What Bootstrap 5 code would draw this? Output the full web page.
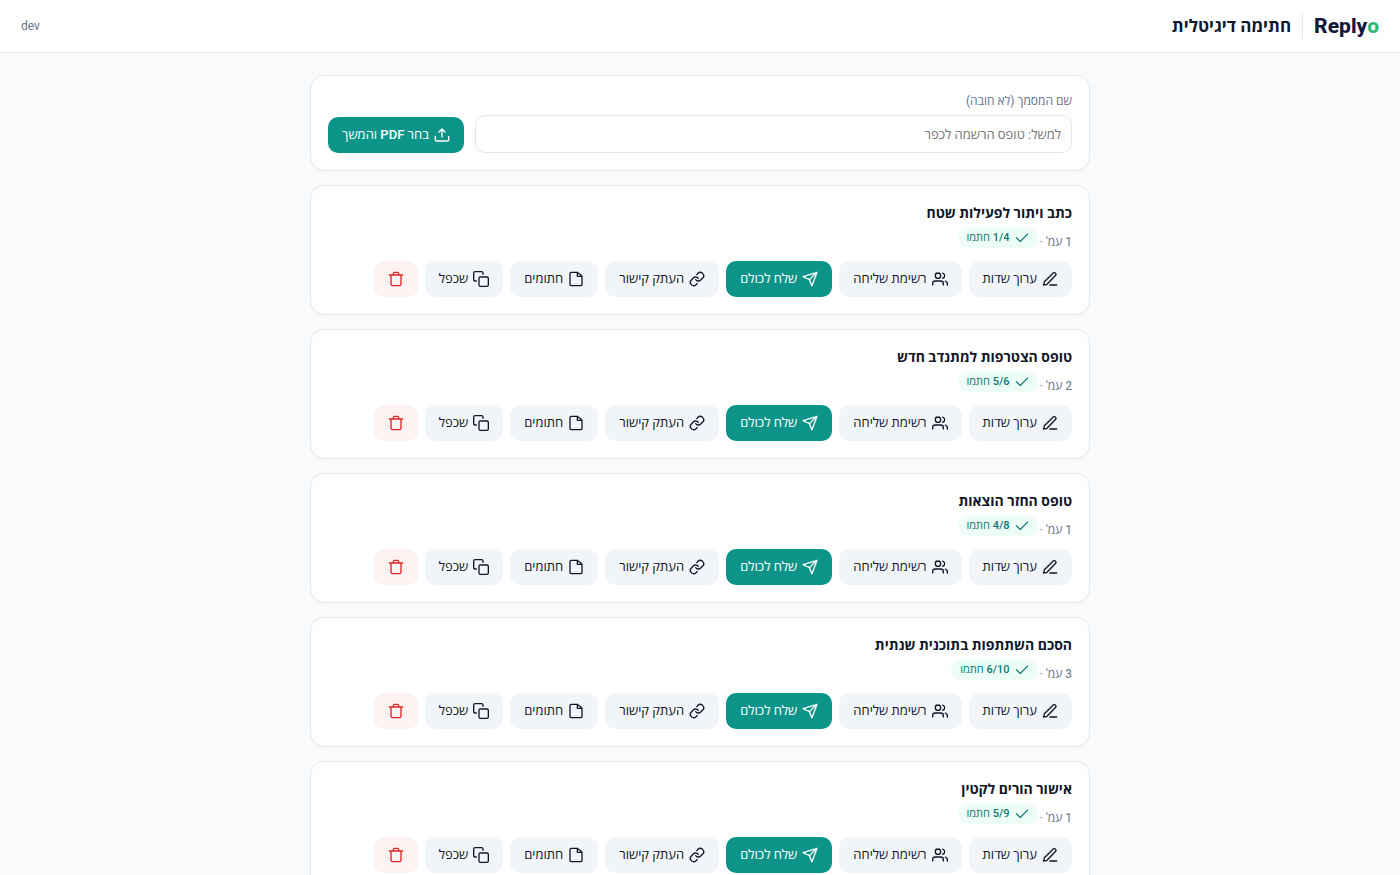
<!DOCTYPE html>
<html lang="he" dir="rtl">
<head>
<meta charset="utf-8">
<meta name="viewport" content="width=device-width, initial-scale=1">
<title>Replyo – חתימה דיגיטלית</title>
<link href="https://cdn.jsdelivr.net/npm/bootstrap@5.3.0/dist/css/bootstrap.min.css" rel="stylesheet">
<script src="https://cdn.jsdelivr.net/npm/bootstrap@5.3.0/dist/js/bootstrap.bundle.min.js" defer></script>
<style>
body{background:#f8fafc;color:#0f172a;font-family:Roboto,"Open Sans","Liberation Sans",sans-serif;font-size:13px;line-height:20px}
.topbar{border-bottom:1px solid #e2e8f0;padding:12px 21px}
.brand{font-size:21px;line-height:28px;font-weight:800;color:#14183a;text-decoration:none}
.brand span{color:#34b67a}
.brand-row{gap:11px}
.divider{width:1px;height:26px;background:#e2e8f0}
.page-title{font-size:17px;line-height:28px;font-weight:700}
.env{font-size:12px;color:#64748b}
.page{max-width:780px;padding-top:22px;padding-bottom:22px}
.stack{display:grid;gap:14px}
.panel{border:1px solid #e2e8f0;border-radius:14px;padding:17px}
.upload{gap:11px}
.field-label{font-size:12px;line-height:16px;color:#64748b;margin-bottom:6px}
.field{height:38px;border:1px solid #e2e8f0;border-radius:10px;padding:0 10px;font-size:13px}
.field::placeholder{color:#757575}
.doc-title{font-size:14px;line-height:20px;font-weight:700;margin-bottom:5px}
.meta{height:22px;gap:2px;margin-bottom:11px;font-size:12px;line-height:16px;color:#64748b}
.signed{gap:5px;height:20px;border-radius:10px;background:#ecfdf5;color:#0f766e;padding:0 9px;font-size:11px;font-weight:500}
.actions{gap:7px}
.act{display:inline-flex;align-items:center;justify-content:center;gap:5px;height:36px;border:0;border-radius:10px;padding:0 14px;font-size:13px;line-height:20px;font-weight:500;background:#f1f5f9;color:#0f172a}
.act:hover{background:#e2e8f0}
.act-main,.act-main:hover{background:#0d9488;color:#fff}
.act-del,.act-del:hover{background:#fef2f2;color:#dc2626}
.ico{width:16px;height:16px;flex:none;fill:none;stroke:currentColor;stroke-width:2;stroke-linecap:round;stroke-linejoin:round}
.signed .ico{width:14px;height:14px}
</style>
</head>
<body>
<svg class="d-none" aria-hidden="true">
<symbol id="i-upload" viewBox="0 0 24 24"><path d="M22 14v5a2 2 0 0 1-2 2H4a2 2 0 0 1-2-2v-5M12 15V3M7.500 7.500 12 3l4.500 4.500"/></symbol>
<symbol id="i-check" viewBox="0 0 24 24"><path d="M21.500 5.500 9 18 2.500 11.500"/></symbol>
<symbol id="i-edit" viewBox="0 0 24 24"><path d="M12 21h10M16.500 3.500a2.120 2.120 0 0 1 4 3L7.500 20l-5 1 1-5Z"/></symbol>
<symbol id="i-users" viewBox="0 0 24 24"><path d="M17 21v-2a4 4 0 0 0-4-4H5a4 4 0 0 0-4 4v2M23 21v-2a4 4 0 0 0-3-3.870M16 3.130a4 4 0 0 1 0 7.750"/><circle cx="9" cy="7" r="4"/></symbol>
<symbol id="i-send" viewBox="0 0 24 24"><path d="M22.500 2 15 22l-4-9-9.500-4.500ZM22 2 11 13"/></symbol>
<symbol id="i-link" viewBox="0 0 24 24"><path d="M10 13a5 5 0 0 0 7.540.540l3-3a5 5 0 0 0-7.070-7.070l-1.720 1.710M14 11a5 5 0 0 0-7.540-.540l-3 3a5 5 0 0 0 7.070 7.070l1.710-1.710"/></symbol>
<symbol id="i-file" viewBox="0 0 24 24"><path d="M14 2H5a2 2 0 0 0-2 2v16a2 2 0 0 0 2 2h14a2 2 0 0 0 2-2V8ZM14 2v6h6"/></symbol>
<symbol id="i-copy" viewBox="0 0 24 24"><rect x="9" y="9" width="14" height="14" rx="2"/><path d="M5 15H3a2 2 0 0 1-2-2V3a2 2 0 0 1 2-2h10a2 2 0 0 1 2 2v2"/></symbol>
<symbol id="i-trash" viewBox="0 0 24 24"><path d="M2 6h20M19.500 6v14a2 2 0 0 1-2 2h-11a2 2 0 0 1-2-2V6M8 6V4a2 2 0 0 1 2-2h4a2 2 0 0 1 2 2v2"/></symbol>
</svg>

<header class="topbar bg-white d-flex align-items-center justify-content-between">
  <div class="brand-row d-flex align-items-center">
    <a class="brand" href="#" dir="ltr">Reply<span>o</span></a>
    <div class="divider"></div>
    <h1 class="page-title mb-0">חתימה דיגיטלית</h1>
  </div>
  <span class="env">dev</span>
</header>

<main class="page container-fluid px-0">
<div class="stack">
  <form class="panel upload bg-white d-flex align-items-end">
    <div class="flex-grow-1">
      <label class="field-label d-block" for="doc-name">שם המסמך (לא חובה)</label>
      <input class="field form-control" id="doc-name" type="text" placeholder="למשל: טופס הרשמה לכפר">
    </div>
    <button class="act act-main" type="button"><svg class="ico"><use href="#i-upload"/></svg>בחר PDF והמשך</button>
  </form>

  <article class="panel bg-white">
    <h2 class="doc-title">כתב ויתור לפעילות שטח</h2>
    <div class="meta d-flex align-items-end"><span>1 עמ' ·</span><span class="signed d-inline-flex align-items-center align-self-start"><svg class="ico"><use href="#i-check"/></svg>1/4 חתמו</span></div>
    <div class="actions d-flex flex-wrap">
      <button class="act" type="button"><svg class="ico"><use href="#i-edit"/></svg>ערוך שדות</button>
      <button class="act" type="button"><svg class="ico"><use href="#i-users"/></svg>רשימת שליחה</button>
      <button class="act act-main" type="button"><svg class="ico"><use href="#i-send"/></svg>שלח לכולם</button>
      <button class="act" type="button"><svg class="ico"><use href="#i-link"/></svg>העתק קישור</button>
      <button class="act" type="button"><svg class="ico"><use href="#i-file"/></svg>חתומים</button>
      <button class="act" type="button"><svg class="ico"><use href="#i-copy"/></svg>שכפל</button>
      <button class="act act-del" type="button" aria-label="מחק"><svg class="ico"><use href="#i-trash"/></svg></button>
    </div>
  </article>

  <article class="panel bg-white">
    <h2 class="doc-title">טופס הצטרפות למתנדב חדש</h2>
    <div class="meta d-flex align-items-end"><span>2 עמ' ·</span><span class="signed d-inline-flex align-items-center align-self-start"><svg class="ico"><use href="#i-check"/></svg>5/6 חתמו</span></div>
    <div class="actions d-flex flex-wrap">
      <button class="act" type="button"><svg class="ico"><use href="#i-edit"/></svg>ערוך שדות</button>
      <button class="act" type="button"><svg class="ico"><use href="#i-users"/></svg>רשימת שליחה</button>
      <button class="act act-main" type="button"><svg class="ico"><use href="#i-send"/></svg>שלח לכולם</button>
      <button class="act" type="button"><svg class="ico"><use href="#i-link"/></svg>העתק קישור</button>
      <button class="act" type="button"><svg class="ico"><use href="#i-file"/></svg>חתומים</button>
      <button class="act" type="button"><svg class="ico"><use href="#i-copy"/></svg>שכפל</button>
      <button class="act act-del" type="button" aria-label="מחק"><svg class="ico"><use href="#i-trash"/></svg></button>
    </div>
  </article>

  <article class="panel bg-white">
    <h2 class="doc-title">טופס החזר הוצאות</h2>
    <div class="meta d-flex align-items-end"><span>1 עמ' ·</span><span class="signed d-inline-flex align-items-center align-self-start"><svg class="ico"><use href="#i-check"/></svg>4/8 חתמו</span></div>
    <div class="actions d-flex flex-wrap">
      <button class="act" type="button"><svg class="ico"><use href="#i-edit"/></svg>ערוך שדות</button>
      <button class="act" type="button"><svg class="ico"><use href="#i-users"/></svg>רשימת שליחה</button>
      <button class="act act-main" type="button"><svg class="ico"><use href="#i-send"/></svg>שלח לכולם</button>
      <button class="act" type="button"><svg class="ico"><use href="#i-link"/></svg>העתק קישור</button>
      <button class="act" type="button"><svg class="ico"><use href="#i-file"/></svg>חתומים</button>
      <button class="act" type="button"><svg class="ico"><use href="#i-copy"/></svg>שכפל</button>
      <button class="act act-del" type="button" aria-label="מחק"><svg class="ico"><use href="#i-trash"/></svg></button>
    </div>
  </article>

  <article class="panel bg-white">
    <h2 class="doc-title">הסכם השתתפות בתוכנית שנתית</h2>
    <div class="meta d-flex align-items-end"><span>3 עמ' ·</span><span class="signed d-inline-flex align-items-center align-self-start"><svg class="ico"><use href="#i-check"/></svg>6/10 חתמו</span></div>
    <div class="actions d-flex flex-wrap">
      <button class="act" type="button"><svg class="ico"><use href="#i-edit"/></svg>ערוך שדות</button>
      <button class="act" type="button"><svg class="ico"><use href="#i-users"/></svg>רשימת שליחה</button>
      <button class="act act-main" type="button"><svg class="ico"><use href="#i-send"/></svg>שלח לכולם</button>
      <button class="act" type="button"><svg class="ico"><use href="#i-link"/></svg>העתק קישור</button>
      <button class="act" type="button"><svg class="ico"><use href="#i-file"/></svg>חתומים</button>
      <button class="act" type="button"><svg class="ico"><use href="#i-copy"/></svg>שכפל</button>
      <button class="act act-del" type="button" aria-label="מחק"><svg class="ico"><use href="#i-trash"/></svg></button>
    </div>
  </article>

  <article class="panel bg-white">
    <h2 class="doc-title">אישור הורים לקטין</h2>
    <div class="meta d-flex align-items-end"><span>1 עמ' ·</span><span class="signed d-inline-flex align-items-center align-self-start"><svg class="ico"><use href="#i-check"/></svg>5/9 חתמו</span></div>
    <div class="actions d-flex flex-wrap">
      <button class="act" type="button"><svg class="ico"><use href="#i-edit"/></svg>ערוך שדות</button>
      <button class="act" type="button"><svg class="ico"><use href="#i-users"/></svg>רשימת שליחה</button>
      <button class="act act-main" type="button"><svg class="ico"><use href="#i-send"/></svg>שלח לכולם</button>
      <button class="act" type="button"><svg class="ico"><use href="#i-link"/></svg>העתק קישור</button>
      <button class="act" type="button"><svg class="ico"><use href="#i-file"/></svg>חתומים</button>
      <button class="act" type="button"><svg class="ico"><use href="#i-copy"/></svg>שכפל</button>
      <button class="act act-del" type="button" aria-label="מחק"><svg class="ico"><use href="#i-trash"/></svg></button>
    </div>
  </article>
</div>
</main>
</body>
</html>
